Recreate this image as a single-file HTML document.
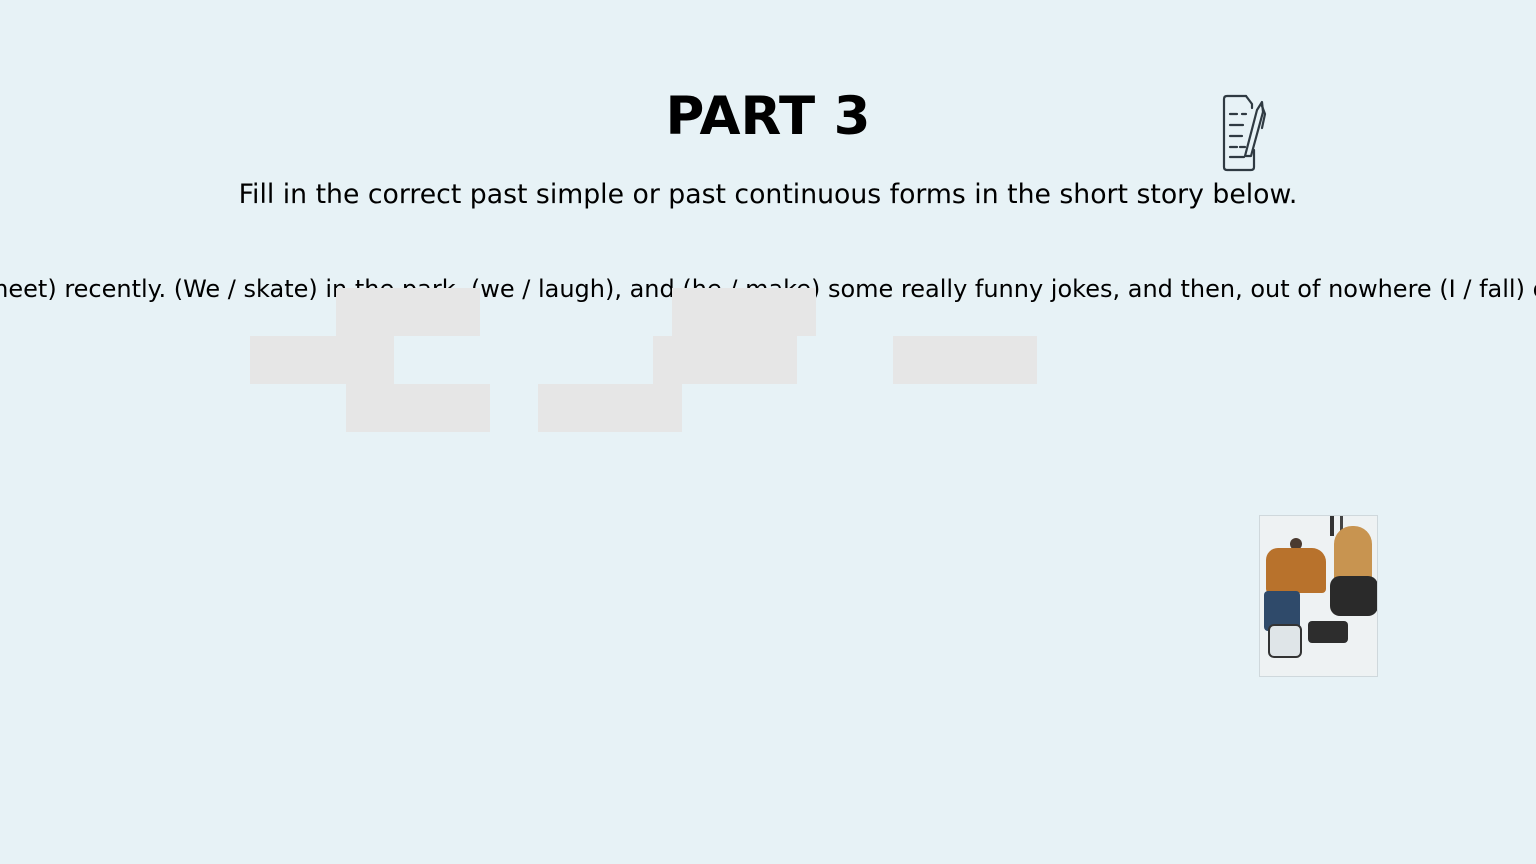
<!DOCTYPE html>
<html><head><meta charset="utf-8"><style>
body{margin:0;width:1536px;height:864px;background:#e7f2f6;overflow:hidden;position:relative;font-family:"DejaVu Sans","Liberation Sans",sans-serif;color:#000}
.t{position:absolute;left:0;width:1536px;text-align:center}
.b{position:absolute;width:144px;height:48px;background:#e6e6e6}
</style></head><body>
<div class="t" style="top:84px;font-size:53px;font-weight:bold;line-height:66px">PART 3</div>
<div class="t" style="top:177px;font-size:26.7px;line-height:36px">Fill in the correct past simple or past continuous forms in the short story below.</div>
<div style="position:absolute;left:0;top:270px;width:1536px;height:40px;overflow:hidden">
<div style="position:absolute;left:-15px;top:4px;font-size:24px;line-height:30px;white-space:nowrap">meet) recently. (We / skate) in the park, (we / laugh), and (he / make) some really funny jokes, and then, out of nowhere (I / fall) on the ice</div>
</div>
<div class="b" style="left:336px;top:288px"></div>
<div class="b" style="left:672px;top:288px"></div>
<div class="b" style="left:250px;top:336px"></div>
<div class="b" style="left:653px;top:336px"></div>
<div class="b" style="left:893px;top:336px"></div>
<div class="b" style="left:346px;top:384px"></div>
<div class="b" style="left:538px;top:384px"></div>
<svg style="position:absolute;left:1218px;top:92px" width="52" height="82" viewBox="0 0 52 82" fill="none" stroke="#2f3a42" stroke-width="2.2" stroke-linecap="round" stroke-linejoin="round">
<path d="M28 4 H9 Q6 4 6 7 V75 Q6 78 9 78 H33 Q36 78 36 75 V58"/>
<path d="M28 4 L34 12 V16"/>
<path d="M12 22h7M24 22h4M12 33h13M12 44h12M12 55h7M22 55h5M12 65h14"/>
<path d="M27 64 L39 18 L44 10 L45 20 L33 64 Z"/>
<path d="M44 14 L47 22 L44 36"/>
</svg>
<div style="position:absolute;left:1259px;top:515px;width:119px;height:162px;background:#eef2f3;border:1px solid #cfd8dc;box-sizing:border-box;overflow:hidden">
<div style="position:absolute;left:70px;top:0;width:4px;height:20px;background:#333"></div>
<div style="position:absolute;left:80px;top:0;width:3px;height:16px;background:#444"></div>
<div style="position:absolute;left:30px;top:22px;width:12px;height:12px;border-radius:50%;background:#4a3a30"></div>
<div style="position:absolute;left:6px;top:32px;width:60px;height:45px;background:#b8722c;border-radius:12px 14px 4px 4px"></div>
<div style="position:absolute;left:4px;top:75px;width:36px;height:40px;background:#2f4a6a;border-radius:4px"></div>
<div style="position:absolute;left:8px;top:108px;width:30px;height:30px;background:#dfe5e8;border:2px solid #333;border-radius:6px"></div>
<div style="position:absolute;left:74px;top:10px;width:38px;height:60px;background:#c89450;border-radius:18px 18px 6px 6px"></div>
<div style="position:absolute;left:70px;top:60px;width:48px;height:40px;background:#2a2a2a;border-radius:10px"></div>
<div style="position:absolute;left:48px;top:105px;width:40px;height:22px;background:#2d2d2d;border-radius:4px"></div>
</div>
</body></html>
